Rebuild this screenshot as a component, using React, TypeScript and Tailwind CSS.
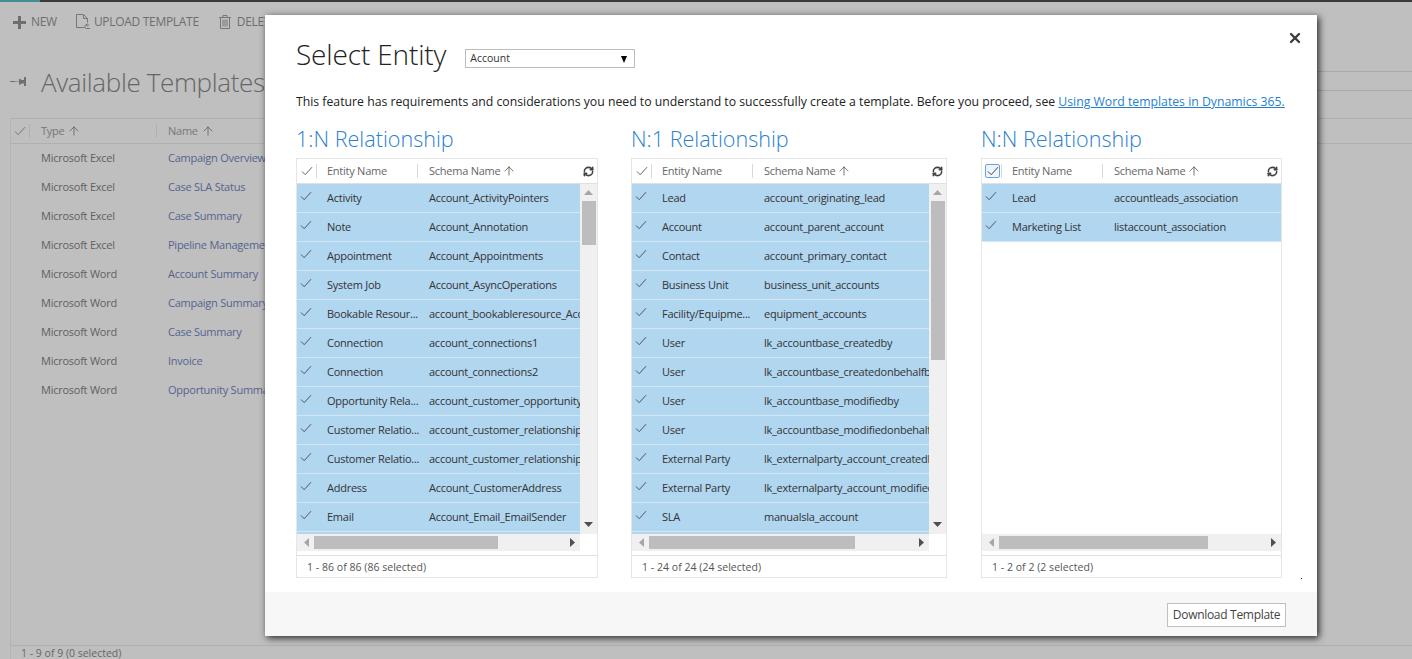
import { ArrowUp, RefreshCw, X } from 'lucide-react';

const FONT = "font-['Open_Sans','Liberation_Sans',sans-serif]";

const templates = [
  ['Microsoft Excel', 'Campaign Overview'],
  ['Microsoft Excel', 'Case SLA Status'],
  ['Microsoft Excel', 'Case Summary'],
  ['Microsoft Excel', 'Pipeline Management'],
  ['Microsoft Word', 'Account Summary'],
  ['Microsoft Word', 'Campaign Summary'],
  ['Microsoft Word', 'Case Summary'],
  ['Microsoft Word', 'Invoice'],
  ['Microsoft Word', 'Opportunity Summary'],
];

const oneToMany = [
  ['Activity', 'Account_ActivityPointers'],
  ['Note', 'Account_Annotation'],
  ['Appointment', 'Account_Appointments'],
  ['System Job', 'Account_AsyncOperations'],
  ['Bookable Resour...', 'account_bookableresource_Account'],
  ['Connection', 'account_connections1'],
  ['Connection', 'account_connections2'],
  ['Opportunity Rela...', 'account_customer_opportunity_roles'],
  ['Customer Relatio...', 'account_customer_relationship_customer'],
  ['Customer Relatio...', 'account_customer_relationship_partner'],
  ['Address', 'Account_CustomerAddress'],
  ['Email', 'Account_Email_EmailSender'],
  ['Fax', 'Account_Faxes'],
];

const manyToOne = [
  ['Lead', 'account_originating_lead'],
  ['Account', 'account_parent_account'],
  ['Contact', 'account_primary_contact'],
  ['Business Unit', 'business_unit_accounts'],
  ['Facility/Equipme...', 'equipment_accounts'],
  ['User', 'lk_accountbase_createdby'],
  ['User', 'lk_accountbase_createdonbehalfby'],
  ['User', 'lk_accountbase_modifiedby'],
  ['User', 'lk_accountbase_modifiedonbehalfby'],
  ['External Party', 'lk_externalparty_account_createdby'],
  ['External Party', 'lk_externalparty_account_modifiedby'],
  ['SLA', 'manualsla_account'],
  ['Owner', 'owner_accounts'],
];

const manyToMany = [
  ['Lead', 'accountleads_association'],
  ['Marketing List', 'listaccount_association'],
];

function Check({ className = 'text-[#555]' }: { className?: string }) {
  return (
    <svg viewBox="0 0 12 10" className={`w-3 h-2.5 ${className}`} fill="none" stroke="currentColor" strokeWidth="1">
      <path d="M1 5.5 L4.2 8.7 L11 1.2" />
    </svg>
  );
}

function Arrow({ dir }: { dir: 'up' | 'down' | 'left' | 'right' }) {
  const points = {
    up: '0,5 4.5,0 9,5',
    down: '0,0 4.5,5 9,0',
    left: '5,0 0,4.5 5,9',
    right: '0,0 5,4.5 0,9',
  }[dir];
  const light = dir === 'up' || dir === 'left';
  return (
    <svg viewBox={dir === 'up' || dir === 'down' ? '0 0 9 5' : '0 0 5 9'} className={dir === 'up' || dir === 'down' ? 'w-[9px] h-[5px]' : 'w-[5px] h-[9px]'}>
      <polygon points={points} fill={light ? '#a6a6a6' : '#505050'} />
    </svg>
  );
}

type GridProps = {
  width: string;
  rows: string[][];
  vThumb?: string;
  hThumb: string;
  footer: string;
  focused?: boolean;
};

function RelationGrid({ width, rows, vThumb, hThumb, footer, focused }: GridProps) {
  return (
    <div className={`${width} h-[420px] shrink-0 border border-[#e6e6e6] flex flex-col bg-white`}>
      {/* header */}
      <div className="h-6 shrink-0 flex items-center text-[11px] text-[#666] tracking-[-0.25px]">
        <div className="w-[19px] shrink-0 flex justify-center">
          {focused ? (
            <div className="w-[15px] h-[14px] border border-[#6f9fe0] rounded-[2px] bg-[#eef4fc] flex items-center justify-center ml-0.5">
              <Check className="text-[#444]" />
            </div>
          ) : (
            <Check className="text-[#666]" />
          )}
        </div>
        <div className="h-[14px] shrink-0 border-l border-[#d8d8d8] pl-[10px] w-[101px]">
          <span className="relative -top-px">Entity Name</span>
        </div>
        <div className="h-[14px] border-l border-[#d8d8d8] pl-[11px] flex-1 flex items-start text-[#666]">
          <span className="relative -top-px">Schema Name</span>
          <ArrowUp className="w-[14px] h-[14px] ml-[2px] text-[#444]" strokeWidth={1.25} />
        </div>
        <RefreshCw className="w-[11px] h-[11px] mr-[3px] text-[#444]" strokeWidth={3.5} />
      </div>

      {/* rows and scrollbars */}
      <div className="h-[351px] shrink-0 flex border-t border-[#e0e0e0]">
        <div className="flex-1 min-w-0 overflow-hidden">
          {rows.map((r, i) => (
            <div key={i} className="h-[29px] flex items-center bg-[#b1d6f0] border-b border-[#d3e6f4] text-[11px] text-[#333] tracking-[-0.25px] whitespace-nowrap">
              <div className="w-[18px] shrink-0 flex justify-center pb-1">
                <Check />
              </div>
              <div className="w-[102px] shrink-0 pl-[12px]">{r[0]}</div>
              <div className="pl-[12px]">{r[1]}</div>
            </div>
          ))}
        </div>
        {vThumb && (
          <div className="w-[17px] bg-[#f0f0f0] flex flex-col items-center pt-[6px] pb-[7px] shrink-0">
            <Arrow dir="up" />
            <div className={`${vThumb} w-[14px] bg-[#bdbdbd] mt-[6px] mb-auto`} />
            <Arrow dir="down" />
          </div>
        )}
      </div>

      {/* horizontal scrollbar */}
      <div className="h-[17px] shrink-0 flex">
        <div className="flex-1 bg-[#f0f0f0] flex items-center pl-[7px] pr-[5px]">
          <Arrow dir="left" />
          <div className={`${hThumb} h-[13px] bg-[#bdbdbd] ml-[5px] mr-auto`} />
          <Arrow dir="right" />
        </div>
        {vThumb && <div className="w-[17px]" />}
      </div>

      {/* footer */}
      <div className="mt-1 flex-1 border-t border-[#e0e0e0] pl-[10px] pt-[2px] flex items-center text-[10.5px] text-[#555] tracking-[0.03px]">
        {footer}
      </div>
    </div>
  );
}

function Background() {
  return (
    <div className="h-[659px] overflow-hidden bg-[#bfbfbf] text-[#666] flex flex-col">
      <div className="h-0.5 shrink-0 flex bg-[#3a3a3a]">
        <div className="w-10 bg-[#3f8f95]" />
      </div>
      <div className="h-[38px] shrink-0 flex items-center pl-[13px] pt-[2px] text-[12px] text-[#6e6e6e] tracking-[-0.3px]">
        <svg viewBox="0 0 13 13" className="w-[13px] h-[13px] mr-[5px]">
          <path d="M5 0h3v5h5v3H8v5H5V8H0V5h5z" fill="#6e6e6e" />
        </svg>
        <span className="mr-[18px]">NEW</span>
        <svg viewBox="0 0 16 16" className="w-4 h-4 mr-[3px]" fill="none" stroke="#777" strokeWidth="1">
          <path d="M9 13.5H1.5v-13h7l4 4v4M8.5.5v4h4" />
          <path d="M15 14.5h-3.5a1.8 1.8 0 0 1 0-3.6H14M12.5 9.5l-1.5 1.4 1.5 1.4" />
        </svg>
        <span className="mr-5">UPLOAD TEMPLATE</span>
        <svg viewBox="0 0 12 14" className="w-3 h-[14px] mr-[6px]" fill="none" stroke="#777" strokeWidth="1">
          <path d="M0 2.5h12M4 2.5V.5h4v2M1.5 2.5v11h9v-11M4 4.5v7M6 4.5v7M8 4.5v7" />
        </svg>
        <span>DELETE</span>
      </div>
      <div className="h-[78px] shrink-0 flex items-center pl-[10px] pt-[6px]">
        <svg viewBox="0 0 16 10" className="w-4 h-[10px] mr-[15px]" fill="#707070">
          <path d="M0 4h5V5H0zM5 4.5h4V4h1v1H5zM9 1.5l3 1.5h3v3.6h-3l-3 1.5z" />
          <rect x="14" y="0" width="2" height="9" />
        </svg>
        <span className="text-[26px] font-light text-[#666] tracking-[-0.35px] whitespace-nowrap">Available Templates</span>
      </div>
      <div className="flex-1 min-h-0 ml-[10px] border-l border-[#b4b4b4] flex flex-col">
        <div className="h-[26px] shrink-0 border-y border-[#b0b0b0] flex items-center text-[11px] text-[#777] tracking-[-0.25px]">
          <div className="w-[18px] shrink-0 flex justify-center"><Check className="text-[#777]" /></div>
          <div className="w-[127px] h-[14px] border-l border-[#b0b0b0] pl-[11px] flex items-start">
            <span className="relative -top-px">Type</span>
            <ArrowUp className="w-[14px] h-[14px] ml-[3px] text-[#555]" strokeWidth={1.25} />
          </div>
          <div className="h-[14px] border-l border-[#b0b0b0] pl-[11px] flex items-start">
            <span className="relative -top-px">Name</span>
            <ArrowUp className="w-[14px] h-[14px] ml-[3px] text-[#555]" strokeWidth={1.25} />
          </div>
        </div>
        <div className="flex-1">
          {templates.map((t, i) => (
            <div key={i} className="h-[29px] flex items-center text-[11px] tracking-[-0.25px] whitespace-nowrap">
              <div className="w-[30px]" />
              <div className="w-[127px] text-[#5f5f5f]">{t[0]}</div>
              <div className="text-[#55648f]">{t[1]}</div>
            </div>
          ))}
        </div>
        <div className="h-[14px] shrink-0 border-t border-[#b0b0b0] pl-[10px] text-[10.5px] text-[#666]">
          1 - 9 of 9 (0 selected)
        </div>
      </div>
    </div>
  );
}

export default function App() {
  return (
    <div className={`relative h-[659px] overflow-hidden ${FONT}`}>
      <Background />

      {/* rules of the page behind, right of the dialog */}
      <div className="absolute left-[1317px] right-0 top-[71px] h-5 border-y border-[#a9a9a9]" />

      <div className="absolute left-[265px] top-[15px] w-[1052px] h-[621px] bg-white shadow-[2px_2px_7px_rgba(0,0,0,0.8)] flex flex-col">
        <button className="absolute right-[14px] top-[15px] text-[#3d3d3d]">
          <X className="w-4 h-4" strokeWidth={3.5} />
        </button>

        <div className="flex-1 pl-[31px] pt-[22px]">
          <div className="flex items-center h-[38px]">
            <h1 className="text-[28px] font-light text-[#222] tracking-[-0.15px] whitespace-nowrap mb-1">Select Entity</h1>
            <div className="ml-[19px] mt-[5px] w-[170px] h-[19px] border border-[#bcbcbc] flex items-center justify-between pl-1 pr-[7px] pt-px text-[10.5px] text-[#333]">
              <span>Account</span>
              <span className="w-0 h-0 border-x-[3.5px] border-x-transparent border-t-[7px] border-t-black" />
            </div>
          </div>
          <p className="mt-[18px] text-[12.25px] text-[#222] whitespace-nowrap">
            This feature has requirements and considerations you need to understand to successfully create a template. Before you proceed, see{' '}
            <a className="text-[#1f7fd0] underline">Using Word templates in Dynamics 365.</a>
          </p>

          <div className="mt-[14px] flex">
            <div className="mr-[33px]">
              <h2 className="h-[28px] text-[21.6px] leading-[28px] font-light text-[#2b7fcf] whitespace-nowrap">1:N Relationship</h2>
              <div className="mt-[5px]">
                <RelationGrid width="w-[302px]" rows={oneToMany} vThumb="h-[44px]" hThumb="w-[184px]" footer="1 - 86 of 86 (86 selected)" />
              </div>
            </div>
            <div className="mr-[34px]">
              <h2 className="h-[28px] text-[21.6px] leading-[28px] font-light text-[#2b7fcf] whitespace-nowrap">N:1 Relationship</h2>
              <div className="mt-[5px]">
                <RelationGrid width="w-[316px]" rows={manyToOne} vThumb="h-[159px]" hThumb="w-[206px]" footer="1 - 24 of 24 (24 selected)" />
              </div>
            </div>
            <div>
              <h2 className="h-[28px] text-[21.6px] leading-[28px] font-light text-[#2b7fcf] whitespace-nowrap">N:N Relationship</h2>
              <div className="mt-[5px]">
                <RelationGrid width="w-[301px]" rows={manyToMany} hThumb="w-[209px]" footer="1 - 2 of 2 (2 selected)" focused />
              </div>
            </div>
          </div>
        </div>

        <div className="absolute left-[1036px] top-[563px] w-px h-px bg-[#1010e0]" />

        <div className="h-[44px] shrink-0 bg-[#f7f7f7] flex items-center justify-end pr-[31px]">
          <button className="h-6 w-[119px] mt-[1px] border border-[#c0c0c0] bg-white text-[12px] text-[#444] tracking-[-0.3px]">
            Download Template
          </button>
        </div>
      </div>
    </div>
  );
}
